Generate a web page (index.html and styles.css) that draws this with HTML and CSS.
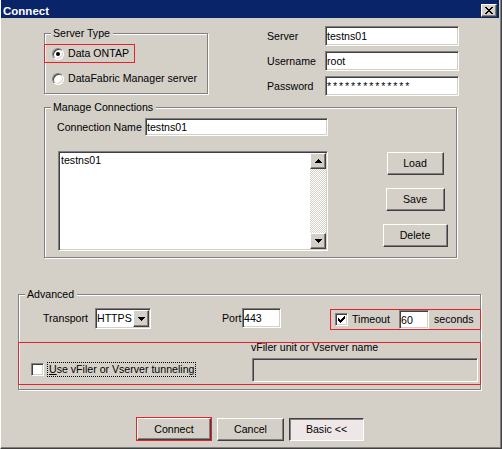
FILE: index.html
```html
<!DOCTYPE html>
<html>
<head>
<meta charset="utf-8">
<title>Connect</title>
<link rel="stylesheet" href="styles.css">
</head>
<body>
<div class="window">
  <div class="titlebar">
    <span class="title">Connect</span>
    <span class="close raised"><svg width="8" height="7" viewBox="0 0 8 7" shape-rendering="crispEdges"><path d="M0 0h2v1H0zM6 0h2v1H6zM1 1h2v1H1zM5 1h2v1H5zM2 2h4v1H2zM3 3h2v1H3zM2 4h4v1H2zM1 5h2v1H1zM5 5h2v1H5zM0 6h2v1H0zM6 6h2v1H6z"/></svg></span>
  </div>

  <div class="top">
    <div class="group server-type">
      <div class="group-title">Server Type</div>
      <div class="option highlight"><span class="radio checked"></span><span>Data ONTAP</span></div>
      <div class="option second"><span class="radio"></span><span>DataFabric Manager server</span></div>
    </div>
    <div class="creds">
      <span class="lbl">Server</span><input class="field sunken" type="text" value="testns01">
      <span class="lbl">Username</span><input class="field sunken" type="text" value="root">
      <span class="lbl">Password</span><input class="field sunken pw" type="text" value="**************">
    </div>
  </div>

  <div class="group manage">
    <div class="group-title">Manage Connections</div>
    <div class="conn-row">
      <span class="lbl conn-lbl">Connection Name</span>
      <input class="field sunken conn-field" type="text" value="testns01">
    </div>
    <div class="list-row">
      <div class="listbox sunken">
        <div class="list-items"><div class="list-item">testns01</div></div>
        <div class="scrollbar">
          <div class="sb-btn raised"><svg width="7" height="4" viewBox="0 0 7 4" shape-rendering="crispEdges"><path d="M3 0h1v1h1v1h1v1h1v1H0V3h1V2h1V1h1z"/></svg></div>
          <div class="sb-track"></div>
          <div class="sb-btn raised"><svg width="7" height="4" viewBox="0 0 7 4" shape-rendering="crispEdges"><path d="M0 0h7v1H6v1H5v1H4v1H3V3H2V2H1V1H0z"/></svg></div>
        </div>
      </div>
      <div class="side-buttons">
        <button class="btn raised btn-load">Load</button>
        <button class="btn raised btn-save">Save</button>
        <button class="btn raised btn-delete">Delete</button>
      </div>
    </div>
  </div>

  <div class="group advanced">
    <div class="group-title">Advanced</div>
    <div class="adv-row">
      <span class="lbl transport-lbl">Transport</span>
      <div class="select sunken">
        <span class="select-value">HTTPS</span>
        <span class="select-btn raised"><svg width="7" height="4" viewBox="0 0 7 4" shape-rendering="crispEdges"><path d="M0 0h7v1H6v1H5v1H4v1H3V3H2V2H1V1H0z"/></svg></span>
      </div>
      <span class="lbl port-lbl">Port</span>
      <input class="field sunken port-field" type="text" value="443">
      <div class="timeout highlight">
        <span class="checkbox"><svg width="7" height="7" viewBox="0 0 7 7" shape-rendering="crispEdges"><path d="M6 0h1v1H6zM5 1h2v1H5zM0 2h1v1H0zM4 2h3v1H4zM0 3h2v1H0zM3 3h3v1H3zM0 4h5v1H0zM1 5h3v1H1zM2 6h1v1H2z"/></svg></span>
        <span class="timeout-lbl">Timeout</span>
        <input class="field sunken timeout-field" type="text" value="60">
        <span class="seconds">seconds</span>
      </div>
    </div>
    <div class="tunnel highlight">
      <div class="tunnel-check">
        <span class="checkbox"></span>
        <span class="focus"><u>U</u>se vFiler or Vserver tunneling</span>
      </div>
      <div class="vfiler">
        <div class="vfiler-lbl">vFiler unit or Vserver name</div>
        <input class="field sunken vfiler-field" type="text" value="" disabled>
      </div>
    </div>
  </div>

  <div class="actions">
    <button class="btn raised btn-connect">Connect</button>
    <button class="btn raised btn-cancel">Cancel</button>
    <button class="btn btn-basic">Basic &lt;&lt;</button>
  </div>
</div>
</body>
</html>
```

FILE: styles.css
```css
* { box-sizing: border-box; }

html, body {
  margin: 0;
  padding: 0;
  overflow: hidden;
}

body {
  font-family: "Liberation Sans", Arial, sans-serif;
  font-size: 10.6px;
  line-height: 13px;
  color: #000;
  background: #d4d0c8;
}

.window {
  width: 502px;
  height: 449px;
  background: #d4d0c8;
  border-left: 1px solid #fff;
  border-right: 1px solid #404040;
  border-bottom: 1px solid #404040;
  box-shadow: inset -1px -1px 0 #808080;
  padding-right: 2px;
  overflow: hidden;
}

/* ---------- shared widgets ---------- */
.raised {
  background: #d4d0c8;
  border: 1px solid;
  border-color: #fff #404040 #404040 #fff;
  box-shadow: inset -1px -1px 0 #808080;
}

.sunken {
  border: 1px solid;
  border-color: #808080 #fff #fff #808080;
  box-shadow: inset 1px 1px 0 #404040, inset -1px -1px 0 #d4d0c8;
}

.highlight { border: 1px solid #e8202a; }

.group {
  border: 1px solid #808080;
  box-shadow: 1px 1px 0 #fff, inset 1px 1px 0 #fff;
}

.group-title {
  width: max-content;
  margin: -7px 0 0 6px;
  padding: 0 3px 0 2px;
  background: #d4d0c8;
  line-height: 13px;
}

.lbl { white-space: nowrap; }

.field {
  display: block;
  margin: 0;
  padding: 0 1px;
  font: inherit;
  color: #000;
  background: #fff;
  outline: none;
  width: 100%;
  height: 100%;
}

.btn {
  margin: 0;
  padding: 0;
  height: 23px;
  font: inherit;
  color: #000;
  text-align: center;
  cursor: default;
  flex: none;
}

.radio {
  width: 12px;
  height: 12px;
  flex: none;
  border-radius: 50%;
  border: 1px solid;
  border-color: #808080 #fff #fff #808080;
  box-shadow: inset 1px 1px 0 #404040, inset -1px -1px 0 #d4d0c8;
  background: #fff;
  display: flex;
  align-items: center;
  justify-content: center;
  margin-right: 4px;
}

.radio.checked::after {
  content: "";
  width: 4px;
  height: 4px;
  border-radius: 50%;
  background: #000;
}

.checkbox {
  width: 13px;
  height: 13px;
  flex: none;
  border: 1px solid;
  border-color: #808080 #fff #fff #808080;
  box-shadow: inset 1px 1px 0 #404040, inset -1px -1px 0 #d4d0c8;
  background: #fff;
  display: flex;
  align-items: center;
  justify-content: center;
}

/* ---------- title bar ---------- */
.titlebar {
  height: 18px;
  background: #0a246a;
  display: flex;
  align-items: flex-end;
  justify-content: space-between;
  padding: 0 2px 0 2px;
}

.title {
  color: #fff;
  font-weight: bold;
  font-size: 11.5px;
  line-height: 13px;
}

.close {
  width: 16px;
  height: 13px;
  margin-bottom: 1px;
  display: flex;
  align-items: center;
  justify-content: center;
}

/* ---------- top section ---------- */
.top {
  display: flex;
  align-items: flex-start;
  margin-top: 8px;
}

.server-type {
  margin: 7px 0 0 43px;
  width: 164px;
  padding-bottom: 5px;
  flex: none;
}

.option {
  display: flex;
  align-items: center;
  height: 19px;
  margin-left: -1px;
  padding-left: 7px;
  white-space: nowrap;
  border: 1px solid transparent;
}

.option.highlight {
  width: 91px;
  margin-top: 4px;
  border-color: #e8202a;
}

.option.second { margin-top: 6px; }

.creds {
  display: grid;
  grid-template-columns: 58px 134px;
  grid-auto-rows: 20px;
  row-gap: 5px;
  align-items: center;
  margin-left: 59px;
}

.pw { letter-spacing: 1.9px; }

/* ---------- manage connections ---------- */
.manage {
  margin: 11px 0 0 43px;
  width: 413px;
  padding-bottom: 6px;
}

.conn-row {
  display: flex;
  align-items: center;
  height: 18px;
  margin: 4px 0 0 12px;
}

.conn-lbl { width: 88px; flex: none; }

.conn-field {
  width: 183px;
  height: 18px;
}

.list-row {
  display: flex;
  align-items: flex-start;
  margin: 15px 0 0 13px;
}

.listbox {
  width: 270px;
  height: 100px;
  flex: none;
  display: flex;
  background: #fff;
}

.list-items {
  flex: 1;
  padding: 2px 0 0 2px;
}

.scrollbar {
  width: 16px;
  margin: 1px 1px 1px 0;
  display: flex;
  flex-direction: column;
}

.sb-btn {
  height: 16px;
  flex: none;
  display: flex;
  align-items: center;
  justify-content: center;
}

.sb-track {
  flex: 1;
  background: repeating-conic-gradient(#fff 0 25%, #d4d0c8 0 50%) 0 0 / 2px 2px;
}

.side-buttons {
  width: 80px;
  flex: none;
  margin: 1px 0 0 47px;
  display: flex;
  flex-direction: column;
  align-items: center;
  gap: 13px;
}

.btn-load { width: 57px; }
.btn-save { width: 59px; }
.btn-delete { width: 65px; }

/* ---------- advanced ---------- */
.advanced {
  margin: 36px 0 0 17px;
  width: 463px;
  padding-bottom: 4px;
}

.adv-row {
  display: flex;
  align-items: flex-start;
  height: 22px;
  margin-top: 7px;
  padding-left: 24px;
}

.adv-row .lbl { line-height: 21px; }

.transport-lbl { width: 52px; flex: none; }

.select {
  width: 56px;
  height: 21px;
  flex: none;
  display: flex;
  background: #fff;
}

.select-value {
  flex: 1;
  padding-left: 1px;
  line-height: 19px;
}

.select-btn {
  width: 16px;
  margin: 1px 1px 1px 0;
  display: flex;
  align-items: center;
  justify-content: center;
}

.port-lbl {
  width: 20px;
  flex: none;
  margin-left: 71px;
}

.port-field {
  width: 39px;
  height: 20px;
  flex: none;
}

.timeout {
  width: 151px;
  height: 21px;
  flex: none;
  margin: 1px 0 0 49px;
  padding-left: 4px;
  display: flex;
  align-items: center;
  white-space: nowrap;
}

.timeout-lbl {
  width: 47px;
  flex: none;
  margin-left: 4px;
}

.timeout-field {
  width: 30px;
  height: 19px;
  flex: none;
}

.seconds { margin-left: 5px; }

.tunnel {
  height: 43px;
  margin: 12px -1px 0 -1px;
  display: flex;
}

.tunnel-check {
  display: flex;
  align-items: center;
  align-self: flex-end;
  margin: 0 0 7px 12px;
  white-space: nowrap;
}

.focus {
  margin-left: 3px;
  padding: 0 1px;
  border: 1px dotted #000;
}

.vfiler {
  margin: 0 2px 0 auto;
  width: 227px;
  flex: none;
}

.vfiler-lbl {
  margin-top: -2px;
  white-space: nowrap;
}

.vfiler-field {
  width: 226px;
  height: 24px;
  margin: 4px 0 0 1px;
  background: #d4d0c8;
}

/* ---------- bottom buttons ---------- */
.actions {
  display: flex;
  align-items: flex-start;
  margin-top: 28px;
  padding-left: 136px;
}

.btn-connect {
  width: 74px;
  height: 22px;
  outline: 1px solid #e8202a;
}

.btn-cancel {
  width: 67px;
  margin-left: 6px;
}

.btn-basic {
  width: 75px;
  margin-left: 5px;
  background: #efe7e7;
  border: 1px solid;
  border-color: #404040 #fff #fff #404040;
  box-shadow: inset 1px 1px 0 #808080;
}
```
